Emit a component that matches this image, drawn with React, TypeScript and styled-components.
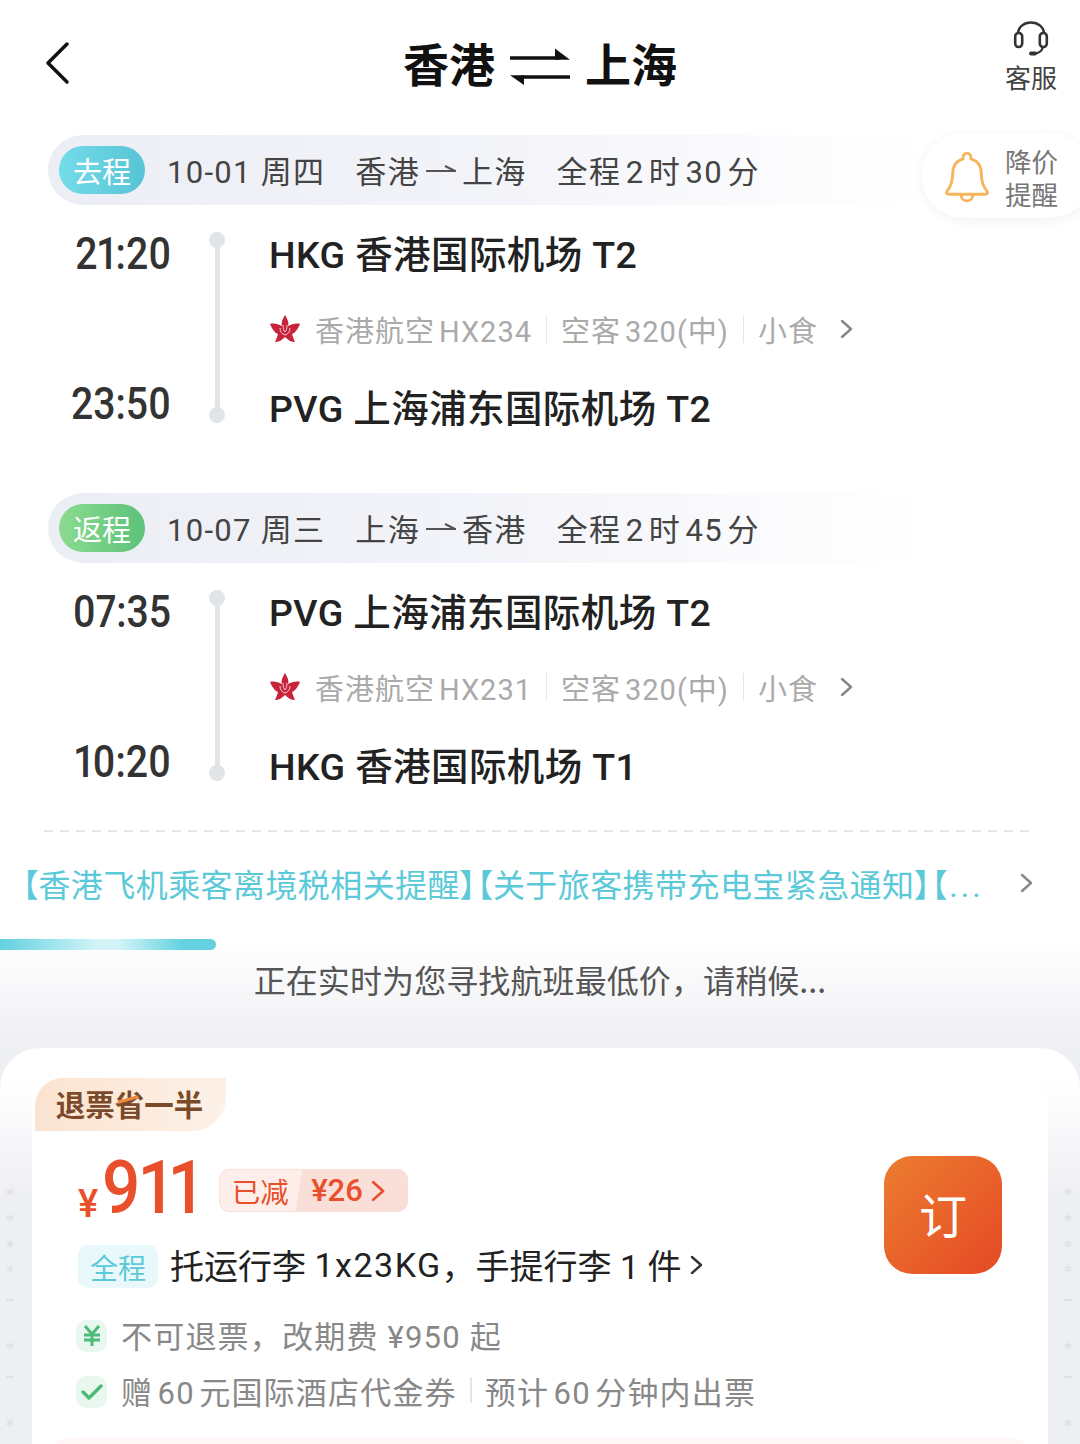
import React from "react";
import styled, { createGlobalStyle } from "styled-components";

const Global = createGlobalStyle`
  html, body { margin: 0; padding: 0; background: #fff; }
  body { font-family: Roboto, "Noto Sans CJK SC", sans-serif; }
  * { box-sizing: border-box; }
`;
const Page = styled.div`width:1080px;height:1444px;overflow:hidden;position:relative;background:#fff;`;
const Header = styled.header`height:135px;display:flex;align-items:center;justify-content:space-between;padding:0 23px 9px 44px;position:relative;`;
const Title = styled.h1`position:absolute;left:403px;top:30px;margin:0;display:flex;align-items:center;gap:14px;font-size:46px;line-height:64px;font-weight:700;color:#111;font-family:"Noto Sans CJK SC",sans-serif;`;
const Service = styled.div`align-self:flex-start;margin-top:21px;display:flex;flex-direction:column;align-items:center;gap:4px;font-size:26px;line-height:32px;color:#444;font-family:"Noto Sans CJK SC",sans-serif;`;
const SegmentBar = styled.div`height:70px;margin-left:48px;width:880px;border-radius:35px 0 0 35px;background:linear-gradient(90deg,#eceef5 0%,#f3f4f9 50%,#fff 100%);display:flex;align-items:center;padding-left:11px;font-size:31px;color:#444;`;
const Pill = styled.span<{$c:string}>`width:86px;height:48px;border-radius:24px;background:${p=>p.$c};color:#fff;font-size:29px;display:flex;align-items:center;justify-content:center;margin-right:22px;font-family:"Noto Sans CJK SC",sans-serif;`;
const Chunk = styled.span`display:inline-flex;align-items:center;margin-right:30px;margin-bottom:2px;letter-spacing:1.3px;white-space:pre;font-family:Roboto,"Noto Sans CJK SC",sans-serif;`;
const Flight = styled.div<{$after:number}>`display:flex;margin-top:10px;margin-bottom:${p=>p.$after}px;`;
const Times = styled.div`width:171px;display:flex;flex-direction:column;align-items:flex-end;padding-top:9px;gap:90px;`;
const Time = styled.div`font-size:45px;line-height:60px;font-weight:500;color:#333;font-variant-numeric:proportional-nums;font-family:Roboto,sans-serif;transform:scaleX(.87);transform-origin:right center;`;
const Rail = styled.div`width:16px;margin:17px 45px 0 38px;height:191px;display:flex;flex-direction:column;align-items:center;justify-content:space-between;background:linear-gradient(#e2e5e8,#e2e5e8) center/5px 100% no-repeat;`;
const Dot = styled.i`width:16px;height:16px;border-radius:50%;background:#e2e5e8;display:block;`;
const Info = styled.div`display:grid;grid-auto-rows:77px;`;
const Airport = styled.div`display:flex;align-items:center;font-size:37.5px;letter-spacing:.4px;font-weight:500;color:#222;padding-bottom:4px;margin-left:-1px;font-family:Roboto,"Noto Sans CJK SC",sans-serif;white-space:pre;`;
const Airline = styled.div`display:flex;align-items:center;font-size:29px;color:#aaa;padding-bottom:4px;font-family:Roboto,"Noto Sans CJK SC",sans-serif;white-space:pre;letter-spacing:1px;`;
const Sep = styled.span`width:1px;height:28px;background:#e6e6e6;margin:0 14px;`;
const LogoBox = styled.span`display:flex;margin-right:15px;`;
const ChevAfter = styled.span`display:flex;margin-left:22px;`;
const Dash = styled.div`height:2px;margin:0 48px 0 44px;background:repeating-linear-gradient(90deg,#e6e6e6 0 9px,transparent 9px 16px);`;
const Notice = styled.div`height:107px;display:flex;align-items:center;padding:0 46px 6px 22px;font-size:32px;color:#5cc9d8;font-family:Roboto,"Noto Sans CJK SC",sans-serif;justify-content:space-between;`;
const NoticeText = styled.span`white-space:nowrap;font-feature-settings:"palt";letter-spacing:.43px;`;
const Dots = styled.span`letter-spacing:3px;margin-left:2px;`;
const Loading = styled.div`height:109px;background:linear-gradient(#fff 0%,#eeeff3 100%);`;
const Progress = styled.div`width:216px;height:11px;border-radius:0 6px 6px 0;background:linear-gradient(90deg,#63d1e0 0%,#d2f4f7 45%,#d2f4f7 55%,#63d1e0 85%);`;
const LoadingText = styled.div`text-align:center;font-size:32px;line-height:58px;letter-spacing:.1px;color:#555;font-family:"Noto Sans CJK SC",sans-serif;`;
const SheetWrap = styled.div`background:#eeeff3;`;
const Sheet = styled.div`height:396px;border-radius:40px 40px 0 0;background:linear-gradient(#fff 0%,#fff 8%,#eeeff3 38%);display:flex;padding-top:27px;`;
const Strip = styled.div`width:32px;padding-top:106px;display:flex;flex-direction:column;align-items:center;color:#d8dade;`;
const Mark = styled.span<{$top:number;$left:number}>`display:block;width:8px;height:8px;margin-top:${p=>p.$top}px;position:relative;left:${p=>p.$left}px;`;
const Card = styled.div`width:1016px;background:#fff;border-radius:30px 30px 0 0;padding-top:3px;`;
const Badge = styled.div`width:191px;height:53px;margin-left:3px;border-radius:28px 0 34px 0;background:linear-gradient(90deg,#fbe3d0,#fdf1e8);display:flex;align-items:center;justify-content:center;font-size:29.5px;font-weight:700;color:#7a4a2a;padding-bottom:4px;font-family:"Noto Sans CJK SC",sans-serif;position:relative;padding-right:2px;`;
const Strike = styled.i`position:absolute;left:82px;top:20px;width:22px;height:3px;background:#ee8a3a;transform:rotate(-15deg);border-radius:2px;`;
const Body = styled.div`display:flex;justify-content:space-between;padding:0 46px 0 46px;`;
const Left = styled.div`display:flex;flex-direction:column;`;
const PriceRow = styled.div`display:flex;align-items:flex-end;height:90px;color:#e84f2a;`;
const Yen = styled.span`font-size:38px;font-weight:500;line-height:36px;margin-bottom:-1px;font-family:Roboto,sans-serif;`;
const Big = styled.span`font-size:74px;line-height:66px;font-weight:500;font-variant-numeric:proportional-nums;font-family:Roboto,sans-serif;transform:scaleX(.91);transform-origin:left bottom;width:98px;margin-left:4px;letter-spacing:-1px;white-space:nowrap;`;
const Reduce = styled.div`display:flex;height:43px;margin-left:19px;margin-bottom:9px;border:1px solid #fbe0da;border-radius:10px;overflow:hidden;background:#fadfd9;font-size:28.5px;align-items:center;font-family:"Noto Sans CJK SC",sans-serif;`;
const ReduceL = styled.span`width:82px;height:100%;background:#fdeeea;display:flex;align-items:center;justify-content:center;clip-path:polygon(0 0,100% 0,92% 100%,0 100%);padding-right:2px;`;
const ReduceR = styled.span`width:105px;padding-right:12px;display:flex;align-items:center;justify-content:center;font-weight:500;gap:8px;font-family:Roboto,sans-serif;font-size:31px;`;
const Baggage = styled.div`display:flex;align-items:center;margin-top:22px;height:43px;font-size:34px;color:#222;white-space:pre;font-family:Roboto,"Noto Sans CJK SC",sans-serif;`;
const Latin = styled.span`letter-spacing:1.5px;`;
const Tag = styled.span`width:80px;height:43px;margin-top:4px;border-radius:10px;background:#e9f9fb;color:#5cc9d8;font-size:28px;display:flex;align-items:center;justify-content:center;margin-right:12px;font-family:"Noto Sans CJK SC",sans-serif;`;
const ChevSlot = styled.span`display:flex;margin-left:8px;`;
const Perk = styled.div<{$mt:number}>`display:flex;align-items:center;height:32px;margin-top:${p=>p.$mt}px;font-size:31px;color:#888;white-space:pre;letter-spacing:1.2px;font-family:Roboto,"Noto Sans CJK SC",sans-serif;`;
const PerkIcon = styled.span`width:31px;height:32px;margin-top:4px;border-radius:10px;background:#e8f8ef;display:flex;align-items:center;justify-content:center;margin-right:14px;margin-left:-2px;`;
const PerkSep = styled.span`width:2px;height:26px;background:#e6e6e6;margin:0 13px;`;
const Book = styled.div`width:118px;height:118px;margin-top:25px;border-radius:28px;background:linear-gradient(135deg,#ec7d30 0%,#e64e26 90%);color:#fff;font-size:48px;padding-bottom:4px;display:flex;align-items:center;justify-content:center;font-family:"Noto Sans CJK SC",sans-serif;`;
const NextCard = styled.div`height:30px;margin:32px 18px 0;border-radius:20px 20px 0 0;background:#fff8f6;`;
const Alert = styled.div`position:absolute;left:922px;top:133px;width:170px;height:85px;border-radius:42px;background:#fff;box-shadow:0 2px 12px rgba(0,0,0,.06);display:flex;align-items:center;padding-left:23px;gap:16px;`;
const AlertIcon = styled.svg`margin-top:3px;flex:none;`;
const AlertText = styled.div`font-size:26.5px;line-height:33px;color:#777;width:54px;flex:none;margin-top:2px;font-family:"Noto Sans CJK SC",sans-serif;`;
const ThinArrow = styled.svg`margin:0 5px;`;

const Thin = () => <ThinArrow width="32" height="14" viewBox="0 0 32 14"><path d="M1 9H31M20 4l10 5" stroke="#555" strokeWidth="2" fill="none"/></ThinArrow>;
const Chev = ({s=18,c="#888",w=2.4}:{s?:number;c?:string;w?:number}) => <svg width={s*.7} height={s} viewBox="0 0 14 20"><path d="M2 2l9 8-9 8" stroke={c} strokeWidth={w} fill="none" strokeLinecap="round" strokeLinejoin="round"/></svg>;
const Orchid = () => (
  <svg width="30" height="28" viewBox="0 0 30 28">
    <path d="M15 0C18 5 19 8 18 11C22 9 26 8 30 9C28 14 25 18 22 19C23 22 24 25 25 27C21 27 18 25 15 22C12 25 9 27 5 27C6 25 7 22 8 19C5 18 2 14 0 9C4 8 8 9 12 11C11 8 12 5 15 0z" fill="#c8233c"/>
    <path d="M10 13c0 4 2 6 5 7 3-1 5-3 5-7M13 10c0 4 1 6 2 7 1-1 2-3 2-7" stroke="#f6c9d0" strokeWidth="1" fill="none"/>
  </svg>
);
const marks: number[] = [0,18,18,17,23,38,23,38];
const marksDraw = (i:number) => (i===4||i===6)
  ? <svg width="8" height="8" viewBox="0 0 8 8"><path d="M0 4h8" stroke="#dcdee2" strokeWidth="1.5"/></svg>
  : <svg width="8" height="8" viewBox="0 0 8 8"><path d="M4 0v8M.5 2l7 4M7.5 2l-7 4" stroke="#dcdee2" strokeWidth="1.2"/></svg>;
const Side = ({dx}:{dx:number}) => <Strip>{marks.map((t,i)=><Mark key={i} $top={t} $left={dx}>{marksDraw(i)}</Mark>)}</Strip>;

const Seg = ({tag,c,date,from,to,dur,t1,t2,a1,a2,no,after}:{tag:string;c:string;date:string;from:string;to:string;dur:string;t1:string;t2:string;a1:string;a2:string;no:string;after:number}) => (
  <>
    <SegmentBar>
      <Pill $c={c}>{tag}</Pill>
      <Chunk>{date}</Chunk>
      <Chunk>{from}<Thin/>{to}</Chunk>
      <Chunk>{dur}</Chunk>
    </SegmentBar>
    <Flight $after={after}>
      <Times><Time>{t1}</Time><Time>{t2}</Time></Times>
      <Rail><Dot/><Dot/></Rail>
      <Info>
        <Airport>{a1}</Airport>
        <Airline>
          <LogoBox><Orchid/></LogoBox>香港航空{"\u200A"}{no}<Sep/>空客{"\u200A"}320(中)<Sep/>小食
          <ChevAfter><Chev s={20} c="#888"/></ChevAfter>
        </Airline>
        <Airport>{a2}</Airport>
      </Info>
    </Flight>
  </>
);

export default function App(){
  return (
    <Page>
      <Global/>
      <Header>
        <svg width="28" height="44" viewBox="0 0 28 44"><path d="M23 3L4 22l19 19" stroke="#111" strokeWidth="3.5" fill="none" strokeLinecap="round" strokeLinejoin="round"/></svg>
        <Title>
          香港
          <svg width="62" height="48" viewBox="0 0 62 48"><path d="M1 20H50M12 39H61" stroke="#111" strokeWidth="3.6" fill="none"/><path d="M46 10.500L61 21.800H46zM1 37.200L15 47V37.200z" fill="#111"/></svg>
          上海
        </Title>
        <Service>
          <svg width="36" height="36" viewBox="0 0 36 36">
            <path d="M5 13C5 6 11 1.500 18 1.500S31 6 31 13" stroke="#333" strokeWidth="2.6" fill="none"/>
            <rect x="2.200" y="12" width="7" height="14" rx="3.500" stroke="#333" strokeWidth="2.600" fill="none"/>
            <rect x="26.800" y="12" width="7" height="14" rx="3.500" stroke="#333" strokeWidth="2.600" fill="none"/>
            <path d="M30 26c-1 4-4 6-8 6.500" stroke="#333" strokeWidth="2.200" fill="none"/>
            <rect x="16" y="30.500" width="8" height="4" rx="2" fill="#333"/>
          </svg>
          客服
        </Service>
      </Header>
      <Seg tag="去程" c="linear-gradient(90deg,#74dbe9,#56c4d5)" date="10-01 周四" from="香港" to="上海" dur={"全程\u200A2\u200A时\u200A30\u200A分"} t1="21:20" t2="23:50" a1="HKG 香港国际机场 T2" a2="PVG 上海浦东国际机场 T2" no="HX234" after={47}/>
      <Seg tag="返程" c="linear-gradient(90deg,#8bdb8f,#5cc27a)" date="10-07 周三" from="上海" to="香港" dur={"全程\u200A2\u200A时\u200A45\u200A分"} t1="07:35" t2="10:20" a1="PVG 上海浦东国际机场 T2" a2="HKG 香港国际机场 T1" no="HX231" after={26}/>
      <Dash/>
      <Notice>
        <NoticeText>【香港飞机乘客离境税相关提醒】【关于旅客携带充电宝紧急通知】【<Dots>...</Dots></NoticeText>
        <Chev s={20} c="#888"/>
      </Notice>
      <Loading>
        <Progress/>
        <LoadingText>正在实时为您寻找航班最低价，请稍候...</LoadingText>
      </Loading>
      <SheetWrap>
        <Sheet>
          <Side dx={-6}/>
          <Card>
            <Badge>退票省一半<Strike/></Badge>
            <Body>
              <Left>
                <PriceRow>
                  <Yen>¥</Yen><Big>911</Big>
                  <Reduce><ReduceL>已减</ReduceL><ReduceR>¥26 <Chev s={22} c="#e84f2a"/></ReduceR></Reduce>
                </PriceRow>
                <Baggage><Tag>全程</Tag>托运行李 <Latin>1x23KG</Latin>，手提行李 1 件<ChevSlot><Chev s={20} c="#333"/></ChevSlot></Baggage>
                <Perk $mt={32}><PerkIcon><svg width="20" height="24" viewBox="0 0 20 24"><path d="M3 2l7 8 7-8M2 11h16M2 16h16M10 10v12" stroke="#4cbb78" strokeWidth="3" fill="none"/></svg></PerkIcon>不可退票，改期费 ¥950 起</Perk>
                <Perk $mt={24}><PerkIcon><svg width="22" height="18" viewBox="0 0 22 18"><path d="M2 9l6 6L20 3" stroke="#4cbb78" strokeWidth="3.4" fill="none" strokeLinecap="round" strokeLinejoin="round"/></svg></PerkIcon>赠{"\u200A"}60{"\u200A"}元国际酒店代金券<PerkSep/>预计{"\u200A"}60{"\u200A"}分钟内出票</Perk>
              </Left>
              <Book>订</Book>
            </Body>
            <NextCard/>
          </Card>
          <Side dx={4}/>
        </Sheet>
      </SheetWrap>
      <Alert>
        <AlertIcon width="44" height="54" viewBox="0 0 46 54"><path d="M23 2a4 4 0 0 1 4 4v2c8 2 11 9 11 16 0 8 2 13 6 18 1 2 0 3-2 3H4c-2 0-3-1-2-3 4-5 6-10 6-18 0-7 3-14 11-16V6a4 4 0 0 1 4-4zM17 46c0 8 12 8 12 0" stroke="#f7b45c" strokeWidth="3" fill="none" strokeLinejoin="round"/></AlertIcon>
        <AlertText>降价提醒</AlertText>
      </Alert>
    </Page>
  );
}
